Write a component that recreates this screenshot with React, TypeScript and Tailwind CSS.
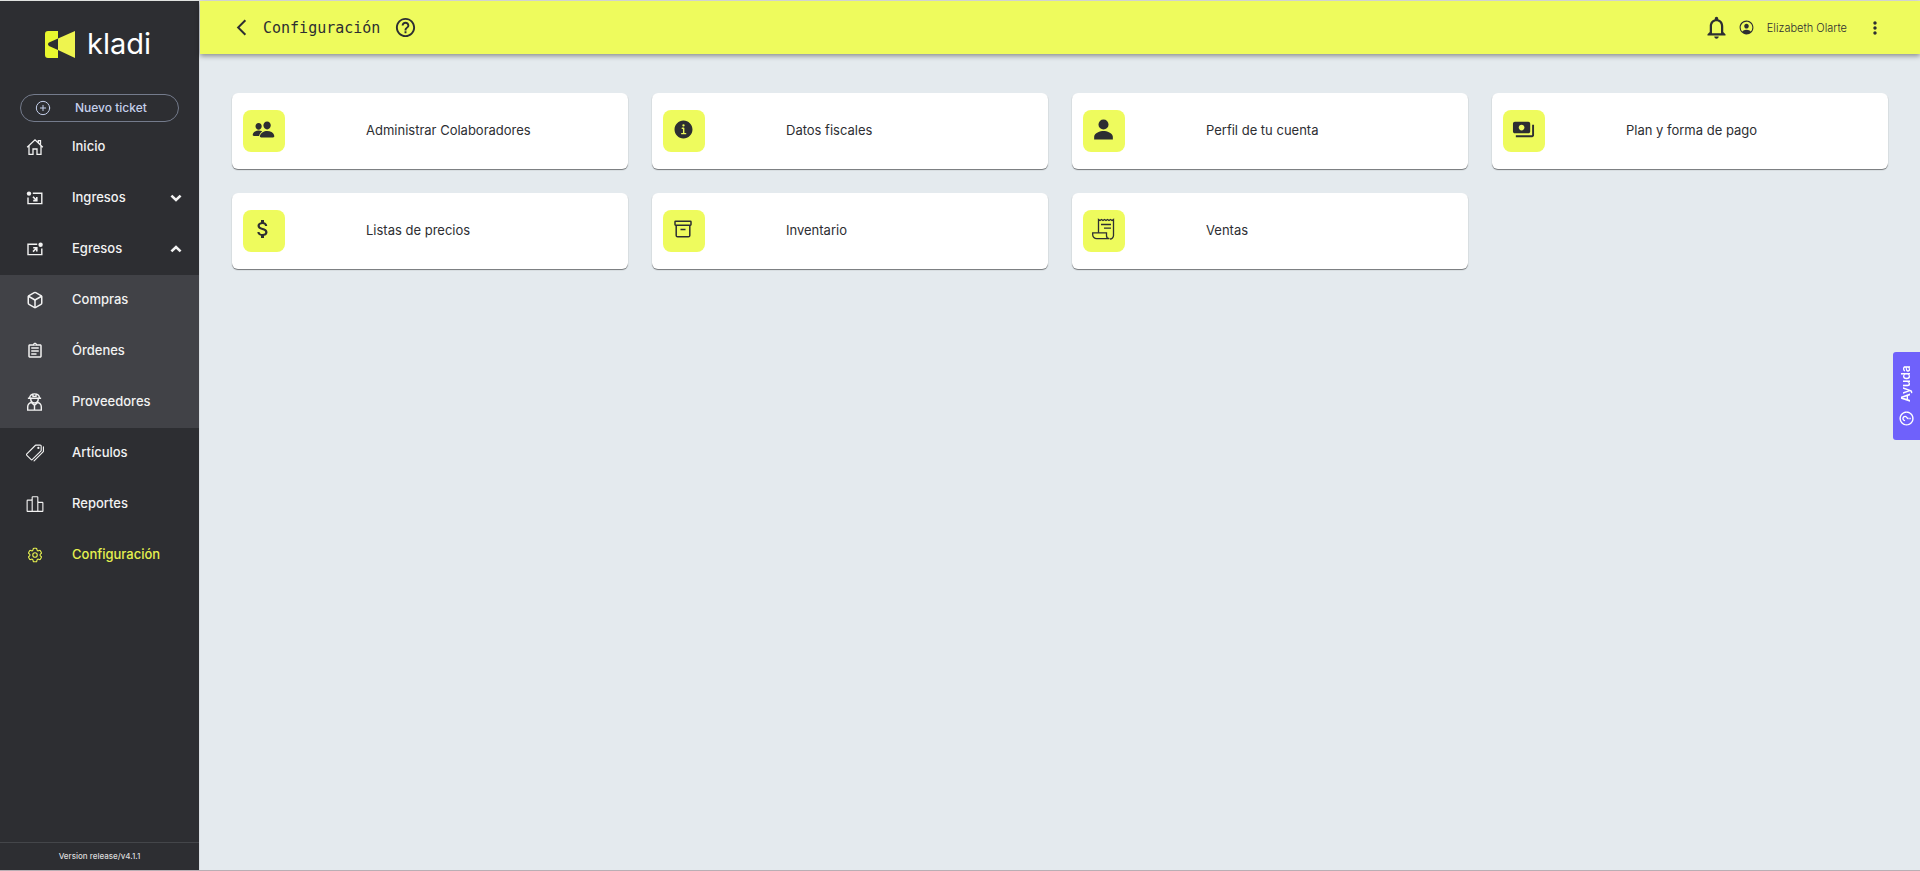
import type { ReactNode } from 'react';
import { HiOutlineCog6Tooth } from 'react-icons/hi2';
import {
  IoInformationCircle,
  IoPeople,
  IoPersonCircleOutline,
  IoPersonSharp,
  IoPodiumOutline,
  IoPricetagsOutline,
} from 'react-icons/io5';
import {
  MdArrowBackIosNew,
  MdAttachMoney,
  MdHelpOutline,
  MdMoreVert,
  MdNotificationsNone,
  MdOutlineAssignment,
  MdPayments,
} from 'react-icons/md';
import { Box, CirclePlus } from 'lucide-react';

const HomeIcon = () => (
  <svg width="18" height="18" viewBox="0 0 18 18" fill="none" stroke="currentColor" strokeWidth="1.3">
    <path d="M1.2 9.3 9 1.8l7.8 7.5M12.3 4.8V2.6h2.2v4.3M3 7.8v8.6h4V11h4v5.4h4V7.8" />
  </svg>
);

const IncomeIcon = () => (
  <svg width="18" height="18" viewBox="0 0 18 18" fill="none" stroke="currentColor" strokeWidth="1.4">
    <path d="M6.8 4.2h9v10.4H2V8.4" />
    <circle cx="3" cy="4.6" r="2.2" fill="currentColor" stroke="none" />
    <path d="m7 7.8 3.6 3.6M10.8 8v3.6H7.2" strokeWidth="1.6" />
  </svg>
);

const OutcomeIcon = () => (
  <svg width="18" height="18" viewBox="0 0 18 18" fill="none" stroke="currentColor" strokeWidth="1.4">
    <path d="M11.2 4.2H2v10.4h13.8V8.4" />
    <circle cx="14.6" cy="4.8" r="2.2" fill="currentColor" stroke="none" />
    <path d="m7 11.6 3.6-3.6M7.2 7.8h3.6v3.6" strokeWidth="1.6" />
  </svg>
);

const WorkerIcon = () => (
  <svg width="17" height="20" viewBox="0 0 18 20" fill="none" stroke="currentColor" strokeWidth="1.5">
    <path d="M2 6h14M3.8 6C3.8 3 6 1.4 9 1.4S14.200 3 14.200 6M7.400 1.800v2.200h3.200V1.800" />
    <path d="M5 6.300c0 3 1.700 4.800 4 4.800s4-1.800 4-4.800" />
    <path d="M5.600 10.400C3 11.300 1.800 13 1.800 15.200v3.400h14.400v-3.400c0-2.200-1.200-3.900-3.800-4.800" />
    <path d="m5.600 10.400 3.400 3 3.400-3M9 13.400v5.200" />
  </svg>
);

const ArchiveIcon = () => (
  <svg width="18" height="18" viewBox="0 0 18 18" fill="none" stroke="currentColor" strokeWidth="1.5">
    <rect x="1" y="1.2" width="16" height="4" rx=".6" />
    <path d="M2.2 5.2v10.2q0 1.4 1.4 1.4h10.8q1.4 0 1.4-1.4V5.2M6.5 9.4h5" />
  </svg>
);

const ReceiptIcon = () => (
  <svg width="24" height="24" viewBox="0 0 24 24" fill="none" stroke="currentColor" strokeWidth="1.3">
    <path d="M7.5 15.8V2.5l1.5 1 1.5-1 1.5 1 1.5-1 1.5 1 1.5-1 1.5 1 1.5-1 1.5 1 1.5-1v16a3.5 3.5 0 0 1-3.5 3.5" />
    <path d="M15.5 15.8H1.7v1.900a4 4 0 0 0 4 4H18.500a3 3 0 0 1-3-3z" />
    <path d="M10 7.5h10M13 11.2h7" />
  </svg>
);

const ArrowIcon = ({ up = false }: { up?: boolean }) => (
  <svg
    width="12"
    height="8"
    viewBox="0 0 12 8"
    fill="none"
    stroke="currentColor"
    strokeWidth="2.6"
    className={up ? 'rotate-180' : ''}
  >
    <path d="m1.4 1.6 4.6 4.4 4.6-4.4" />
  </svg>
);

interface NavItem {
  label: string;
  icon: ReactNode;
  arrow?: ReactNode;
  active?: boolean;
}

const mainItems: NavItem[] = [
  { label: 'Inicio', icon: <HomeIcon /> },
  { label: 'Ingresos', icon: <IncomeIcon />, arrow: <ArrowIcon /> },
  { label: 'Egresos', icon: <OutcomeIcon />, arrow: <ArrowIcon up /> },
];

const subItems: NavItem[] = [
  { label: 'Compras', icon: <Box size={18} strokeWidth={2} /> },
  { label: 'Órdenes', icon: <MdOutlineAssignment size={18} /> },
  { label: 'Proveedores', icon: <WorkerIcon /> },
];

const bottomItems: NavItem[] = [
  { label: 'Artículos', icon: <IoPricetagsOutline size={18} /> },
  { label: 'Reportes', icon: <IoPodiumOutline size={18} /> },
  { label: 'Configuración', icon: <HiOutlineCog6Tooth size={18} />, active: true },
];

const cards = [
  { label: 'Administrar Colaboradores', icon: <IoPeople size={23} /> },
  { label: 'Datos fiscales', icon: <IoInformationCircle size={23} /> },
  { label: 'Perfil de tu cuenta', icon: <IoPersonSharp size={23} /> },
  { label: 'Plan y forma de pago', icon: <MdPayments size={23} /> },
  { label: 'Listas de precios', icon: <MdAttachMoney size={24} /> },
  { label: 'Inventario', icon: <ArchiveIcon /> },
  { label: 'Ventas', icon: <ReceiptIcon /> },
];

const NavList = ({ items, className = '' }: { items: NavItem[]; className?: string }) => (
  <ul className={className}>
    {items.map((item) => (
      <li key={item.label}>
        <a
          href="#"
          className={`flex h-[51px] items-center pb-0.5 pl-[26px] pr-[17px] text-[13px] font-medium ${
            item.active ? 'text-[#e6f14f]' : 'text-[#f2f2f2]'
          }`}
        >
          <span className="flex w-[46px] shrink-0 items-center">{item.icon}</span>
          <span className="grow">{item.label}</span>
          {item.arrow}
        </a>
      </li>
    ))}
  </ul>
);

const Sidebar = () => (
  <aside className="flex w-[199px] shrink-0 flex-col bg-[#2d2e32]">
    <div className="flex h-[86px] items-center gap-3 pl-[45px] text-white">
      <svg width="30" height="27" viewBox="0 0 30 27" role="img" aria-label="Logo">
        <path d="M3 0h10v7.5L4 11.5q-2 1.7 0 3.4l9 4V27H3q-3 0-3-3V3q0-3 3-3z" fill="#e9f72f" />
        <path d="M13 7.5 30 0v27l-17-8z" fill="#eef44f" />
      </svg>
      <span className="text-[29px] leading-8">kladi</span>
    </div>
    <div className="px-5 pt-[7px]">
      <button className="flex h-7 w-full items-center rounded-full border border-[#747b8c] pl-[14px] text-xs font-medium text-[#c5d0ec]">
        <CirclePlus size={16} strokeWidth={1.5} />
        <span className="pl-6 pb-px">Nuevo ticket</span>
      </button>
    </div>
    <nav>
      <NavList items={mainItems} />
      <NavList items={subItems} className="bg-[#414247]" />
      <NavList items={bottomItems} />
    </nav>
    <p className="mt-auto flex h-7 items-center justify-center border-t border-[#44464a] pb-0.5 text-[8px] font-medium text-[#dcdcdc]">
      Version release/v4.1.1
    </p>
  </aside>
);

const Header = () => (
  <header className="z-10 flex h-[53px] items-center bg-[#eefb5d] px-8 text-[#2d2e32] shadow-[0_2px_5px_rgba(0,0,0,0.4)]">
    <button aria-label="Regresar" className="flex w-[31px] justify-start">
      <MdArrowBackIosNew size={19} />
    </button>
    <h1 className="pt-px font-['DejaVu_Sans_Mono',monospace] text-[15px]">Configuración</h1>
    <button aria-label="Ayuda de la página" className="ml-[14px]">
      <MdHelpOutline size={23} />
    </button>
    <div className="ml-auto flex items-center pr-[3px]">
      <button aria-label="Notificaciones">
        <MdNotificationsNone size={27} />
      </button>
      <IoPersonCircleOutline size={17} className="ml-2" />
      <span className="ml-3 pt-px text-[11px] font-light">Elizabeth Olarte</span>
      <button aria-label="Más opciones" className="ml-[18px]">
        <MdMoreVert size={20} />
      </button>
    </div>
  </header>
);

const App = () => {
  return (
    <div className="flex min-h-screen border-t border-b border-t-[#e0e2e0] border-b-[#b9aeb4] bg-[#e4eaee] font-[Inter,sans-serif]">
      <Sidebar />
      <div className="flex grow flex-col border-l border-[#dadfe3]">
        <Header />
        <main className="grid grid-cols-4 gap-6 px-8 pt-[39px]">
          {cards.map((card) => (
            <a
              key={card.label}
              href="#"
              className="flex h-[76px] items-center rounded-md bg-white pl-[11px] text-[13px] text-[#2d2e32] shadow-[0_1px_1px_rgba(0,0,0,0.5)]"
            >
              <span className="flex w-[123px] shrink-0">
                <span className="flex size-[42px] items-center justify-center rounded-lg bg-[#eefb5d] pb-1 pr-0.5">
                  {card.icon}
                </span>
              </span>
              <span className="pb-px">{card.label}</span>
            </a>
          ))}
        </main>
      </div>

      {/* Floating help tab */}
      <button className="fixed right-0 top-[352px] z-20 flex h-[88px] w-[27px] rotate-180 items-center justify-center gap-2 rounded-r-[3px] bg-[#6f61fb] text-xs font-semibold text-white [writing-mode:vertical-rl]">
        <MdHelpOutline size={17} className="rotate-90" />
        Ayuda
      </button>
    </div>
  );
};

export default App;
